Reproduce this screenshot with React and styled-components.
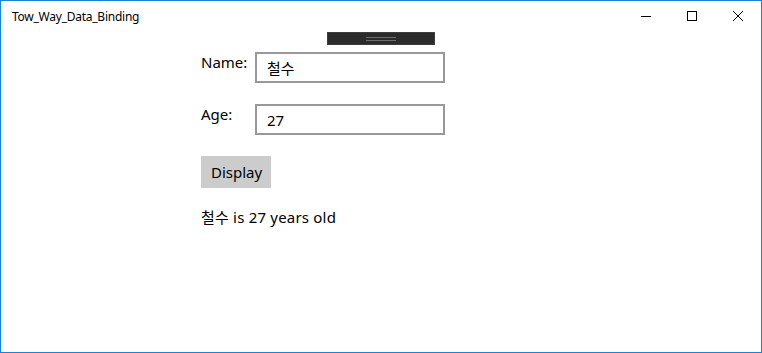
import React from 'react';
import styled, { createGlobalStyle } from 'styled-components';

const GlobalStyle = createGlobalStyle`
  html, body {
    margin: 0;
    padding: 0;
    background: #ffffff;
  }
  body {
    font-family: "Noto Sans", "Noto Sans CJK KR", sans-serif;
  }
`;

const App = () => {
  return (
    <Window>
      <GlobalStyle />
      <TitleBar>
        <Title>Tow_Way_Data_Binding</Title>
        <Controls>
          <CtrlButton aria-label="minimize">
            <svg width="10" height="10" viewBox="0 0 10 10">
              <path d="M0 5.5 H10" stroke="#000" strokeWidth="1" />
            </svg>
          </CtrlButton>
          <CtrlButton aria-label="maximize">
            <svg width="10" height="10" viewBox="0 0 10 10">
              <rect x="0.5" y="0.5" width="9" height="9" fill="none" stroke="#000" strokeWidth="1" />
            </svg>
          </CtrlButton>
          <CtrlButton aria-label="close">
            <svg width="10" height="10" viewBox="0 0 10 10">
              <path d="M0 0 L10 10 M10 0 L0 10" stroke="#000" strokeWidth="1" />
            </svg>
          </CtrlButton>
        </Controls>
      </TitleBar>

      <Content>
        <DebugBar>
          <Grip />
          <Grip />
        </DebugBar>

        <Form>
          <Row>
            <Label>Name:</Label>
            <TextBox defaultValue="철수" />
          </Row>
          <Row>
            <Label>Age:</Label>
            <TextBox defaultValue="27" />
          </Row>
          <Button>Display</Button>
          <Result>철수 is 27 years old</Result>
        </Form>
      </Content>
    </Window>
  );
};

//window frame
const Window = styled.div`
  width: 762px;
  height: 353px;
  box-sizing: border-box;
  border: 1px solid #1883d7;
  display: flex;
  flex-direction: column;
  background: #fff;
`;

const TitleBar = styled.div`
  height: 31px;
  display: flex;
  align-items: center;
  justify-content: space-between;
`;

const Title = styled.div`
  padding-left: 11px;
  font-size: 12px;
  letter-spacing: -0.25px;
  color: #000;
  margin-top: -1px;
`;

const Controls = styled.div`
  display: flex;
  align-items: center;
  height: 100%;
`;

const CtrlButton = styled.div`
  width: 46px;
  height: 100%;
  display: flex;
  align-items: center;
  justify-content: center;
  svg { display: block; margin-top: -1px; }
`;

//page
const Content = styled.div`
  position: relative;
  flex: 1;
  padding: 20px 0 0 200px;
`;

const DebugBar = styled.div`
  position: absolute;
  top: 0;
  left: 326px;
  width: 106px;
  height: 11px;
  background: #2b2b2b;
  border: 1px solid #3d3d3d;
  display: flex;
  flex-direction: column;
  align-items: center;
  justify-content: center;
  gap: 2px;
`;

const Grip = styled.div`
  width: 30px;
  height: 1px;
  background: #6e6e6e;
`;

const Form = styled.div`
  display: flex;
  flex-direction: column;
  align-items: flex-start;
`;

const Row = styled.div`
  display: flex;
  align-items: flex-start;
  margin-bottom: 21px;
`;

const Label = styled.div`
  width: 54px;
  font-size: 15px;
  line-height: 20px;
  color: #000;
`;

const TextBox = styled.input`
  box-sizing: border-box;
  width: 190px;
  height: 31px;
  border: 2px solid #999999;
  padding: 0 10px;
  margin: 0;
  font-family: "Noto Sans", "Noto Sans CJK KR", sans-serif;
  font-size: 15px;
  color: #000;
  outline: none;
  background: #fff;
`;

const Button = styled.div`
  height: 32px;
  padding: 0 9px 0 10px;
  background: #cccccc;
  display: flex;
  align-items: center;
  font-size: 15px;
  color: #000;
`;

const Result = styled.div`
  margin-top: 19px;
  font-size: 15px;
  line-height: 20px;
  letter-spacing: 0.2px;
  color: #000;
`;

export default App;
